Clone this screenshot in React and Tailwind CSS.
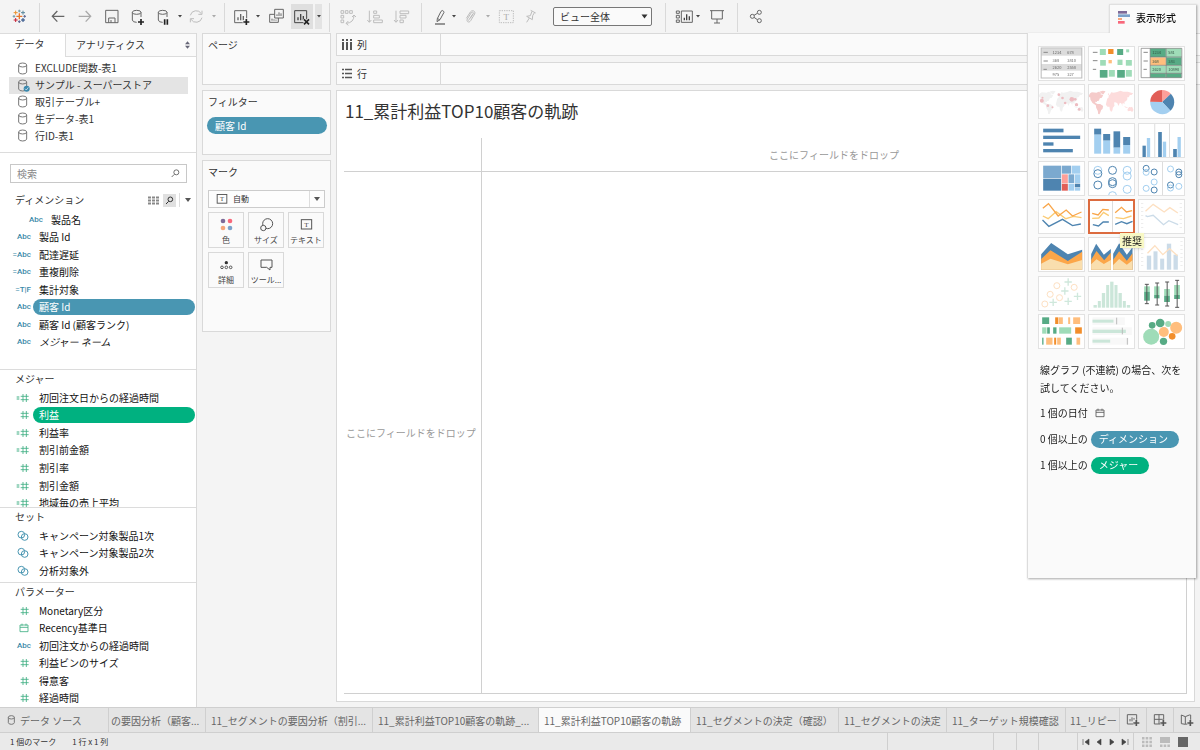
import React from 'react';
import clsx from 'clsx';

const BAR = { fill: 'none', stroke: '#666', strokeWidth: 3 };
const DIM = { fill: 'none', stroke: '#bdbdbd', strokeWidth: 3 };

const sources = [
    { name: 'EXCLUDE関数-表1' },
    { name: 'サンプル - スーパーストア', active: true },
    { name: '取引テーブル+' },
    { name: '生データ-表1' },
    { name: '行ID-表1' },
];

const dimensions = [
    { type: 'Abc', name: '製品名', nested: true },
    { type: 'Abc', name: '製品 Id' },
    { type: '=Abc', name: '配達遅延' },
    { type: '=Abc', name: '重複削除' },
    { type: '=T|F', name: '集計対象' },
    { type: 'Abc', name: '顧客 Id', pill: 'bg-[#4996b2]' },
    { type: 'Abc', name: '顧客 Id (顧客ランク)' },
    { type: 'Abc', name: 'メジャー ネーム', italic: true },
];

const measures = [
    { type: '=#', name: '初回注文日からの経過時間' },
    { type: '#', name: '利益', pill: 'bg-[#00b180]' },
    { type: '=#', name: '利益率' },
    { type: '=#', name: '割引前金額' },
    { type: '#', name: '割引率' },
    { type: '=#', name: '割引金額' },
    { type: '=#', name: '地域毎の売上平均' },
];

const sets = [
    { type: 'set', name: 'キャンペーン対象製品1次' },
    { type: 'set', name: 'キャンペーン対象製品2次' },
    { type: 'set', name: '分析対象外' },
];

const parameters = [
    { type: '#', name: 'Monetary区分' },
    { type: 'date', name: 'Recency基準日' },
    { type: 'Abc', name: '初回注文からの経過時間' },
    { type: '#', name: '利益ビンのサイズ' },
    { type: '#', name: '得意客' },
    { type: '#', name: '経過時間' },
];

const sheets = [
    { name: 'の要因分析（顧客...', width: 'w-[97px]', pad: 'pl-0.5' },
    { name: '11_セグメントの要因分析（割引...', width: 'w-[167px]' },
    { name: '11_累計利益TOP10顧客の軌跡_...', width: 'w-[166px]' },
    { name: '11_累計利益TOP10顧客の軌跡', width: 'w-[152px]', active: true },
    { name: '11_セグメントの決定（確認）', width: 'w-[148px]' },
    { name: '11_セグメントの決定', width: 'w-[108px]' },
    { name: '11_ターゲット規模確認', width: 'w-[119px]' },
];

/* ---------- toolbar ---------- */

// x and w are toolbar pixels, the drawing inside uses a grid three times finer
function Tool({ label, x, w, active, children }) {
    return (
        <button aria-label={label} className="h-[33px] shrink-0">
            <svg width={w} height="33" viewBox={`${x * 3} 0 ${w * 3} 99`} {...BAR}>
                {active && <rect x={x * 3} y="12" width={w * 3} height="75" fill="#dfdfdf" stroke="none" />}
                {children}
            </svg>
        </button>
    );
}

function Caret({ className, dim, label = 'メニュー' }) {
    return (
        <button aria-label={label} className={clsx('flex shrink-0 items-center justify-center', className)}>
            <svg width="4" height="3" viewBox="0 0 4 3"><path d="M0 0h4L2 2.4z" fill={dim ? '#aaa' : '#444'} /></svg>
        </button>
    );
}

const Sep = () => <div className="h-[29px] w-px shrink-0 self-end bg-[#d9d9d9] mb-px" />;

const Plus = ({ x, y }) => (
    <>
        <path d={`M${x - 11} ${y}h22M${x} ${y - 11}v22`} stroke="#f4f4f4" strokeWidth="9" />
        <path d={`M${x - 9} ${y}h18M${x} ${y - 9}v18`} stroke="#222" strokeWidth="5" />
    </>
);

function Logo() {
    const marks = [
        [58, 49, 9, '#e8762c', 4], [58, 33, 4, '#7099a6', 3], [58, 65, 4, '#5c6692', 3],
        [42, 49, 4, '#7099a6', 3], [74, 49, 4, '#5c6692', 3], [47, 38, 6, '#eb912c', 3],
        [69, 38, 6, '#59879b', 3], [47, 60, 6, '#c72035', 3], [69, 60, 6, '#1f457e', 3],
    ];
    return (
        <Tool label="スタート ページ" x={0} w={39}>
            {marks.map(([x, y, r, color, sw]) => (
                <path key={`${x}-${y}`} d={`M${x - r} ${y}h${r * 2}M${x} ${y - r}v${r * 2}`} stroke={color} strokeWidth={sw} />
            ))}
        </Tool>
    );
}

function Toolbar() {
    return (
        <header className="flex h-[33px] shrink-0 items-center">
            <Logo />
            <Sep />
            <Tool label="戻る" x={40} w={31}><path d="M158 49h35M172 33l-15 16 15 16" strokeWidth="4" /></Tool>
            <Tool label="進む" x={71} w={27}><path d="M236 49h35M257 33l15 16-15 16" stroke="#aaa" strokeWidth="4" /></Tool>
            <Tool label="保存" x={98} w={27}><path d="M317 31h37v37h-37zM326 68V54h19v14M333 60v8" /></Tool>
            <Tool label="新しいデータ ソース" x={125} w={26}>
                <ellipse cx="410" cy="37" rx="13" ry="6" />
                <path d="M397 37v23q1 7 13 7M423 37v14" />
                <Plus x={423} y={66} />
            </Tool>
            <Tool label="自動更新の一時停止" x={151} w={23}>
                <ellipse cx="488" cy="37" rx="13" ry="6" />
                <path d="M475 37v23q1 7 13 7M501 37v14" />
                <path d="M494 58v16M502 58v16" stroke="#222" strokeWidth="5" />
            </Tool>
            <Caret className="w-3" />
            <Tool label="更新" x={186} w={22}>
                <path d="M571 46a18 18 0 0 1 33-5M606 53a18 18 0 0 1-33 5M606 32v11h-11M571 67V56h11" stroke="#bdbdbd" />
            </Tool>
            <Caret className="w-4 pr-1" dim />
            <Sep />
            <Tool label="新しいワークシート" x={225} w={27}>
                <path d="M704 32h36v36h-36z" />
                <path d="M714 61v-9M722 61V42M730 61V48" strokeWidth="4" />
                <Plus x={739} y={66} />
            </Tool>
            <Caret className="w-3" />
            <Tool label="複製" x={264} w={27}>
                <path d="M824 28h26v26h-26zM824 43h-15v24h26V54" />
                <path d="M831 48v-5M837 48V37M843 48v-8M816 62v-6M822 62v-4M828 62v-3" />
            </Tool>
            <Tool label="シートのクリア" x={291} w={22} active>
                <path d="M884 32h36v36h-36z" stroke="#444" />
                <path d="M894 61v-9M902 61V42M910 61V48" stroke="#444" strokeWidth="4" />
                <path d="M911 57l17 17M928 57l-17 17" stroke="#dfdfdf" strokeWidth="10" />
                <path d="M912 58l15 15M927 58l-15 15" stroke="#222" strokeWidth="5" />
            </Tool>
            <Caret className="ml-0.5 mr-[7px] h-[25px] w-[7px] bg-[#e3e3e3]" />
            <Sep />
            <Tool label="行と列の交換" x={0} w={31}>
                <g {...DIM}><path d="M33 32h8v8h-8zM46 32h8v8h-8zM59 32h8v8h-8zM33 46h8v8h-8zM33 60h8v8h-8zM72 46q0 22-23 24M66 51l6-6 6 6M55 63l-7 7 7 6" /></g>
            </Tool>
            <Tool label="昇順で並べ替え" x={31} w={27}>
                <g {...DIM}><path d="M118 32v34M112 60l6 7 6-7M131 33h9v7h-9zM131 46h17v8h-17zM131 60h26v8h-26z" /></g>
            </Tool>
            <Tool label="降順で並べ替え" x={58} w={33}>
                <g {...DIM}><path d="M198 32v34M192 60l6 7 6-7M210 33h26v8h-26zM210 46h18v8h-18zM210 60h10v8h-10z" /></g>
            </Tool>
            <Sep />
            <Tool label="ハイライト" x={92} w={26}>
                <path d="M315 72h30" strokeWidth="4" />
                <path d="M322 56l11-22q4-5 8 0l1 3-12 22-9 6zM322 55l8 5" />
            </Tool>
            <Caret className="w-3" />
            <Tool label="グループ" x={130} w={22}>
                <path d="M429 41l-14 21M409 55l12-19c6-8 17-2 13 6l-12 20c-5 8-14 3-10-5l12-19c3-4 8 0 6 3l-9 14" stroke="#bdbdbd" />
            </Tool>
            <Caret className="w-[11px]" dim />
            <Tool label="マーク ラベルの表示" x={163} w={26}>
                <rect x="508" y="32" width="42" height="36" stroke="#bdbdbd" strokeDasharray="4 3" />
                <text x="529" y="59" textAnchor="middle" fontSize="27" fill="#aaa" stroke="none" className="font-['Liberation_Serif',serif]">T</text>
            </Tool>
            <Tool label="軸の固定" x={189} w={26}>
                <path d="M602 31l15 8M606 34l-5 13-11 2 17 10 1-12 6-10M598 54l-8 13" stroke="#bdbdbd" />
            </Tool>
            <label className="relative ml-2 mr-[13px] flex h-[19px] w-[99px] shrink-0">
                <select aria-label="適合" className="w-full appearance-none rounded-xs border border-[#777] bg-[#fafafa] pl-1.5 text-[10px] leading-4 text-[#333]">
                    <option>ビュー全体</option>
                </select>
                <svg className="pointer-events-none absolute right-1 top-[7px]" width="7" height="5" viewBox="0 0 7 5"><path d="M.5.5h6L3.500 4.500z" fill="#333" /></svg>
            </label>
            <Sep />
            <Tool label="カードの表示/非表示" x={336} w={27}>
                <path d="M1039 33h9v7h-9zM1039 46h9v8h-9zM1039 60h9v7h-9zM1054 33h33v34h-33z" />
                <path d="M1063 61v-8M1070 61V43M1078 61V49" stroke="#444" strokeWidth="4" />
            </Tool>
            <Caret className="w-[13px] pr-1" />
            <Tool label="プレゼンテーション モード" x={376} w={31}>
                <path d="M1140 32h42M1145 32v25h32V32M1161 57v12M1152 69h18" />
            </Tool>
            <Sep />
            <Tool label="共有" x={408} w={36}>
                <circle cx="1267" cy="49" r="6" /><circle cx="1288" cy="37" r="6" /><circle cx="1288" cy="62" r="6" />
                <path d="M1272 46l10-6M1272 52l10 7" />
            </Tool>
        </header>
    );
}

/* ---------- data pane ---------- */

function Cylinder({ active }) {
    return (
        <svg width="12" height="13" viewBox="0 0 36 39" fill="none" stroke="#777" strokeWidth="3">
            <ellipse cx="14" cy="9" rx="12" ry="6" />
            <path d="M2 9v21q1 6 12 6t12-6V9" />
            {active && <><circle cx="26" cy="29" r="9" fill="#3a88ad" stroke="none" /><path d="M21 29l4 4 6-8" stroke="#fff" strokeWidth="2" /></>}
        </svg>
    );
}

function Calendar({ color }) {
    return (
        <svg width="10" height="10" viewBox="0 0 30 30" fill="none" stroke={color} strokeWidth="2.500">
            <path d="M3 6h24v20H3zM3 13h24M9 2v6M21 2v6" />
        </svg>
    );
}

function FieldType({ type }) {
    if (type === 'set') {
        return (
            <svg className="mr-1" width="12" height="12" viewBox="0 0 36 36" fill="none" stroke="#4996b2" strokeWidth="3">
                <circle cx="13" cy="14" r="10" /><circle cx="23" cy="21" r="10" />
            </svg>
        );
    }
    if (type === 'date') return <span className="mr-1"><Calendar color="#3fae83" /></span>;
    if (type.endsWith('#')) {
        return (
            <svg className="mr-1" width="14" height="10" viewBox="0 0 42 30" fill="none" stroke="#3fae83" strokeWidth="2.500">
                <path d="M24 3v24M34 3v24M17 10h24M17 20h24" />
                {type === '=#' && <path d="M5 12h8M5 18h8" strokeWidth="3" />}
            </svg>
        );
    }
    return <span className="mr-0.5 font-[Roboto,sans-serif] text-[8px] font-medium leading-4 text-[#3a88a8]">{type}</span>;
}

function FieldList({ items, className }) {
    return (
        <ul className={clsx('grid auto-rows-fr', className)}>
            {items.map((f) => (
                <li key={f.name} className={clsx('flex items-center', f.nested && 'pl-3')}>
                    <span className="flex w-[33px] shrink-0 items-center justify-end">
                        <FieldType type={f.type} />
                    </span>
                    <button
                        className={clsx(
                            'mr-px h-4 flex-1 whitespace-nowrap rounded-full pl-1.5 text-left leading-4',
                            f.pill ? ['text-white', f.pill] : 'text-[#111]',
                            f.italic && 'italic'
                        )}
                    >
                        {f.name}
                    </button>
                </li>
            ))}
        </ul>
    );
}

function DataPane() {
    return (
        <aside className="flex w-[197px] shrink-0 flex-col overflow-hidden border-r border-[#d9d9d9] bg-white">
            <div className="flex h-6 shrink-0 border-t border-[#dcdcdc] leading-5">
                <button className="flex w-[65px] shrink-0 justify-center pr-1.5">データ</button>
                <button className="flex flex-1 items-center justify-between border-b border-l border-[#dcdcdc] bg-[#fafafa] pl-2.5 pr-1.5">
                    アナリティクス
                    <svg width="5" height="8" viewBox="0 0 5 8" fill="#667"><path d="M0 3.200h5L2.500.3zM0 4.800h5L2.500 7.700z" /></svg>
                </button>
            </div>
            <ul className="mb-2 ml-[9px] mr-2 mt-[3px] grid h-[84px] shrink-0 auto-rows-fr">
                {sources.map((s) => (
                    <li key={s.name} className={clsx('flex items-center gap-[5px] pl-[9px]', s.active && 'bg-[#e4e4e4]')}>
                        <Cylinder active={s.active} />
                        <button className="leading-4">{s.name}</button>
                    </li>
                ))}
            </ul>
            <div className="flex h-[217px] shrink-0 flex-col border-t border-[#dcdcdc] pt-[11px]">
                <label className="ml-2.5 mr-[9px] flex h-[19px] items-center border border-[#c8c8c8] px-1.5">
                    <input aria-label="検索" placeholder="検索" className="min-w-0 flex-1 leading-4 outline-none placeholder:text-[#888]" />
                    <svg width="9" height="9" viewBox="0 0 27 27" fill="none" stroke="#555" strokeWidth="2.500"><circle cx="16" cy="10" r="7.500" /><path d="M10 16l-8 8" /></svg>
                </label>
                <div className="flex items-center pl-[15px] pt-[9px]">
                    <h2 className="flex-1 leading-4">ディメンション</h2>
                    <button aria-label="一覧表示">
                        <svg width="11" height="9" viewBox="0 0 11 9" fill="#888">
                            {[0, 3, 6].map((y) => [0, 4, 8].map((x) => <rect key={`${x}${y}`} x={x} y={y + 0.5} width="3" height="2" />))}
                        </svg>
                    </button>
                    <button aria-label="フィールドの検索" className="ml-1 flex h-[13px] w-[13px] items-center justify-center bg-[#e0e0e0]">
                        <svg width="9" height="9" viewBox="0 0 27 27" fill="none" stroke="#333" strokeWidth="3"><circle cx="16" cy="10" r="7" /><path d="M11 16l-8 8" /></svg>
                    </button>
                    <button aria-label="表示メニュー" className="ml-[3px] mr-[5px] flex h-3.5 items-center border-l border-[#ddd] pl-[5px]">
                        <svg width="6" height="4" viewBox="0 0 6 4"><path d="M0 0h6L3 4z" fill="#555" /></svg>
                    </button>
                </div>
                <FieldList items={dimensions} className="mt-[3px] h-[140px]" />
            </div>
            <div className="h-[138px] shrink-0 overflow-hidden border-t border-[#dcdcdc]">
                <h2 className="pb-px pl-[15px] leading-[18px]">メジャー</h2>
                <FieldList items={measures} className="h-[123px]" />
            </div>
            <div className="h-[75px] shrink-0 border-t border-[#dcdcdc]">
                <h2 className="pb-px pl-[15px] leading-[18px]">セット</h2>
                <FieldList items={sets} className="h-[53px]" />
            </div>
            <div className="flex-1 border-t border-[#dcdcdc]">
                <h2 className="pb-px pl-[15px] leading-[18px]">パラメーター</h2>
                <FieldList items={parameters} className="h-[105px]" />
            </div>
        </aside>
    );
}

/* ---------- shelves ---------- */

function MarkButton({ label, children }) {
    return (
        <button className="flex h-9 w-[36px] flex-col items-center justify-between whitespace-nowrap border border-[#d9d9d9] pt-1 text-[8px] leading-3 text-[#444]">
            <svg width="15" height="15" viewBox="0 0 45 45" fill="none" stroke="#555" strokeWidth="3">{children}</svg>
            <span className="pb-px">{label}</span>
        </button>
    );
}

const TextGlyph = () => (
    <>
        <rect x="7" y="8" width="31" height="28" />
        <text x="22.500" y="30" textAnchor="middle" fontSize="21" fill="#444" stroke="none" className="font-['Liberation_Serif',serif]">T</text>
    </>
);

function Cards() {
    const card = 'border border-[#d9d9d9] bg-[#fafafa] pl-[5px] pr-[3px]';
    return (
        <div className="flex w-[129px] shrink-0 flex-col gap-[5px]">
            <section className={clsx(card, 'h-[52px] pt-[3px]')}><h2 className="leading-4">ページ</h2></section>
            <section className={clsx(card, 'h-[65px] pt-[3px]')}>
                <h2 className="leading-4">フィルター</h2>
                <button className="-ml-px mt-[7px] h-[17px] w-[120px] rounded-full bg-[#4996b2] pl-2 text-left leading-[16px] text-white">顧客 Id</button>
            </section>
            <section className={clsx(card, 'h-[172px] pt-[3px]')}>
                <h2 className="leading-4">マーク</h2>
                <label className="relative mt-2.5 flex h-[18px] w-[117px]">
                    <select aria-label="マークの種類" className="w-full appearance-none border border-[#ccc] bg-[#fdfdfd] pl-6 text-[8px] leading-4">
                        <option>自動</option>
                    </select>
                    <svg className="pointer-events-none absolute left-[7px] top-0.5" width="14" height="14" viewBox="0 0 45 45" fill="none" stroke="#555" strokeWidth="3"><TextGlyph /></svg>
                    <svg className="pointer-events-none absolute right-0 top-0" width="16" height="18" viewBox="0 0 16 18"><path d="M.5 1v16" stroke="#ddd" /><path d="M5 7h6L8 11z" fill="#555" /></svg>
                </label>
                <div className="mt-1 flex flex-wrap gap-1">
                    <MarkButton label="色">
                        <g stroke="none"><circle cx="12" cy="12" r="7" fill="#7d6a98" /><circle cx="33" cy="12" r="7" fill="#f8687b" /><circle cx="12" cy="33" r="7" fill="#f5a57b" /><circle cx="33" cy="33" r="7" fill="#7ba1ca" /></g>
                    </MarkButton>
                    <MarkButton label="サイズ"><circle cx="26" cy="20" r="15" /><circle cx="13" cy="33" r="8" fill="#fafafa" /></MarkButton>
                    <MarkButton label="テキスト"><TextGlyph /></MarkButton>
                    <MarkButton label="詳細">
                        <circle cx="22" cy="17" r="5" fill="#333" stroke="none" /><circle cx="9" cy="31" r="4" /><circle cx="22" cy="31" r="4" /><circle cx="35" cy="31" r="4" />
                    </MarkButton>
                    <MarkButton label="ツール..."><path d="M6 9h33v22h-6v8l-10-8H6z" /></MarkButton>
                </div>
            </section>
        </div>
    );
}

function Shelf({ label, children }) {
    return (
        <div className="flex h-[23px] shrink-0 border border-r-0 border-[#d9d9d9] bg-[#fafafa]">
            <div className="flex w-[104px] items-center gap-[5px] border-r border-[#d9d9d9] pl-[5px] leading-4">
                <svg width="10" height="11" viewBox="0 0 10 11" stroke="#555" strokeWidth="2">{children}</svg>
                {label}
            </div>
        </div>
    );
}

function Sheet() {
    return (
        <main className="flex min-w-0 flex-1 flex-col">
            <Shelf label="列"><path d="M1 0v2M5 0v2M9 0v2M1 3v8M5 3v8M9 3v8" /></Shelf>
            <div className="h-[6px]" />
            <Shelf label="行"><path d="M0 1.500h2M0 5.500h2M0 9.500h2M3 1.500h7M3 5.500h7M3 9.500h7" strokeWidth="1.500" /></Shelf>
            <section className="mb-[5px] mr-[5px] mt-[5px] flex flex-1 flex-col border border-[#d9d9d9] bg-white pb-[7px] pl-[7px] pr-[7px]">
                <h1 className="pb-3.5 pl-px pt-[7px] text-[17px] leading-[26px] text-[#333]">11_累計利益TOP10顧客の軌跡</h1>
                <div className="grid flex-1 grid-cols-[138px_1fr] grid-rows-[34px_1fr] border-b border-r border-[#d0d0d0] text-[#999]">
                    <div className="border-b border-r border-[#d0d0d0]" />
                    <div className="flex items-center justify-center border-b border-[#d0d0d0]">ここにフィールドをドロップ</div>
                    <div className="flex items-center whitespace-nowrap border-r border-[#d0d0d0] pl-0.5">ここにフィールドをドロップ</div>
                    <div />
                </div>
            </section>
        </main>
    );
}

/* ---------- show me ---------- */

const Rects = ({ list }) => list.map(([x, y, w, h, fill]) => <rect key={`${x}-${y}-${fill}`} x={x} y={y} width={w} height={h} fill={fill} />);
const Rings = ({ list, r = 12 }) => list.map(([x, y, c]) => <circle key={`${x}-${y}`} cx={x} cy={y} r={r} fill="none" stroke={c} strokeWidth="3" />);

const B = '#4e84b0';
const L = '#a3cff0';
const G = '#57ab85';
const M = '#9fdcb8';
const O = '#f28e2b';
const P = '#ffbe7d';

const AMERICAS = 'M6 28l5-3 14 1 6-3 8 3-2 5 8 3-4 7-6 2-3 7-5 1-1 3-5-1 1 4 6 3 8 0 9 6-2 9-4 3-2 6-3 7-4-1-1-9-5-10-1-7-10-7-6-10-1-7-7-1zM33 23l11-3 8 2-6 9-5 0-3-6z';
const OLD_WORLD = 'M57 44l5-4-1-5 5-4 3-6 8 1 10-2 10-4 8 3 14 0 10 3 6 2-5 5-5 0-3 7-4-1-1 8-4 5-4 1 0 8-4-4-3 3 2 7-5-9-4-2-4 10-4-9-8-3-1 5 1 6-5 6-1 8-4 5-4-7-1-9-6 0-5-6zM60 28l3 1-1 4-3-1zM118 76l5-7 5 1 4-2 4 10-4 6-5-4-8 2zM107 66l6 2 8 3-8 0z';

const charts = [
    { name: 'テキスト表', art: (
        <>
            <Rects list={[[9, 7, 122, 22, '#dcdcdc'], [9, 54, 122, 20, '#dcdcdc']]} />
            <rect x="9" y="6" width="122" height="90" fill="none" stroke="#bbb" strokeWidth="3" />
            <path d="M16 19h13M16 45h13M16 70h10" stroke="#888" strokeWidth="3" />
            <g fontSize="12" fill="#666"><text x="43" y="24">1234</text><text x="87" y="24">678</text><text x="43" y="48">368</text><text x="87" y="48">3810</text><text x="43" y="70">2620</text><text x="87" y="70">2558</text><text x="43" y="91">975</text><text x="87" y="91">327</text></g>
        </>
    ) },
    { name: 'ヒート マップ', art: (
        <>
            <path d="M14 19h14M14 44h14M14 70h10" stroke="#888" strokeWidth="3" />
            <Rects list={[[35, 9, 18, 18, M], [60, 9, 16, 15, O], [87, 9, 18, 18, G], [114, 10, 9, 9, M], [36, 42, 17, 17, M], [61, 42, 10, 10, P], [88, 41, 15, 16, M], [113, 42, 18, 17, M], [35, 72, 23, 23, G], [62, 72, 18, 20, M], [87, 72, 23, 23, G], [113, 72, 18, 20, M]]} />
        </>
    ) },
    { name: 'ハイライト表', art: (
        <>
            <Rects list={[[36, 7, 47, 26, G], [84, 7, 46, 26, M], [36, 34, 47, 24, P], [84, 34, 46, 24, G], [36, 59, 47, 22, M], [84, 59, 46, 22, M], [36, 82, 47, 13, G], [84, 82, 46, 13, G]]} />
            <path d="M9 7h122v88H9zM36 7v88M84 7v88M36 33h95M36 58h95M36 82h95" fill="none" stroke="#777" strokeWidth="2" />
            <path d="M16 19h13M16 45h13M16 70h10" stroke="#888" strokeWidth="3" />
            <g fontSize="12" fill="#335544"><text x="42" y="24">1234</text><text x="90" y="24">581</text><text x="42" y="50">368</text><text x="90" y="50">383</text><text x="42" y="75">2620</text><text x="90" y="75">10890</text></g>
        </>
    ) },
    { name: '記号マップ', art: (
        <>
            <path d={AMERICAS + OLD_WORLD} fill="#f1f1f1" />
            {[[13, 41, 3], [11, 50, 6], [29, 65, 4], [43, 70, 3], [62, 32, 4], [73, 42, 4], [81, 57, 4], [101, 46, 7], [111, 46, 4], [115, 62, 5], [123, 76, 4]].map(([x, y, r]) => <circle key={x} cx={x} cy={y} r={r} fill="#edbcc1" />)}
        </>
    ) },
    { name: 'マップ', art: <><path d={OLD_WORLD} fill="#fddcdc" /><path d={AMERICAS} fill="#f5cbca" /></> },
    { name: '円グラフ', art: (
        <>
            <path d="M72 54V18A36 36 0 0 1 98 29z" fill="#fe9f99" />
            <path d="M72 54L98 29A36 36 0 0 1 97 80z" fill={B} />
            <path d="M72 54L97 80A36 36 0 0 1 36 53z" fill={L} />
            <path d="M72 54L36 53A36 36 0 0 1 72 18z" fill="#e15e57" />
        </>
    ) },
    { name: '横棒', art: <Rects list={[[15, 17, 61, 11, B], [15, 38, 111, 10, B], [15, 58, 31, 10, B], [15, 78, 89, 10, B]]} /> },
    { name: '積み上げ棒', art: <Rects list={[[18, 17, 21, 18, B], [18, 35, 21, 57, L], [45, 33, 21, 20, B], [45, 53, 21, 39, L], [76, 25, 20, 49, B], [76, 74, 20, 18, L], [105, 42, 21, 24, B], [105, 66, 21, 26, L]]} /> },
    { name: '並列棒', art: <Rects list={[[13, 68, 10, 35, B], [26, 45, 10, 58, L], [49, 2, 2, 101, '#ccc'], [60, 27, 11, 76, B], [74, 56, 10, 47, L], [93, 2, 2, 101, '#ccc'], [105, 78, 11, 25, B], [118, 42, 10, 61, L]]} /> },
    { name: 'ツリーマップ', art: <Rects list={[[15, 14, 54, 37, '#7ba9cf'], [15, 53, 54, 36, B], [71, 14, 28, 24, '#7ba9cf'], [101, 14, 25, 24, L], [71, 40, 18, 26, '#fe9f99'], [91, 40, 17, 26, '#7ba9cf'], [110, 40, 16, 26, L], [71, 68, 18, 21, '#e15e57'], [91, 68, 17, 21, L], [110, 68, 16, 11, B], [110, 80, 16, 9, L]]} /> },
    { name: '円ビュー', art: <Rings list={[[29, 28, L], [29, 38, B], [29, 72, B], [73, 28, B], [73, 62, B], [73, 68, B], [73, 104, L], [117, 28, L], [117, 45, L], [117, 85, L]]} /> },
    { name: '並列円', art: <><path d="M73 2v101" stroke="#ccc" strokeWidth="2" /><Rings r={9} list={[[24, 22, B], [24, 34, L], [48, 33, B], [48, 63, L], [24, 82, L], [48, 87, B], [97, 24, L], [122, 33, B], [122, 41, B], [97, 72, B], [97, 81, L], [122, 76, L]]} /></> },
    { name: '線 (連続)', art: (
        <g fill="none" strokeWidth="4"><path d="M14 43l16 8 24-21 29 21 23-7 24 4" transform="translate(0 8)" stroke="#fbcb74" /><path d="M14 28l17-14 29 37 24-18 19 18 27-12" stroke="#f9a64a" /><path d="M13 63l19 19 41-21 30 19 25-5" stroke={B} /></g>
    ) },
    { name: '線 (不連続)', active: true, art: (
        <g fill="none" strokeWidth="4"><path d="M73 2v101" stroke="#ccc" strokeWidth="2" /><path d="M12 58l20-1 14-17 16 10M82 56l24 3 24-8" stroke="#fbcb74" /><path d="M12 43l18 5 14-17 18 2M81 41l19-16 15 14 17-4" stroke="#f9a64a" /><path d="M14 77l17 4 14-12h17M81 76l19-8 16 6 17-7" stroke={B} /></g>
    ) },
    { name: '二重線', art: (
        <g fill="none" strokeWidth="4"><path d="M12 12v80M128 12v80" stroke="#e8e8e8" strokeWidth="7" strokeDasharray="2 10" /><path d="M22 37l23-21 33 23 17-13 24 16" stroke="#fde0c2" /><path d="M22 50l6 3 17-4 31 28 16-12 28 12" stroke="#cbdbe8" /></g>
    ) },
    { name: '面グラフ (連続)', art: <><path d="M9 52l30-34 50 34 43-14v60H9z" fill={B} /><path d="M9 66l28-26 52 32 43-28v54H9z" fill="#fca649" /><path d="M9 80l28-15 52 17 43-13v29H9z" fill="#f9deae" /></> },
    { name: '面グラフ (不連続)', art: <><path d="M9 51l15-31 23 33 21-17v62H9zM75 50l18-31 23 34 17-22v67H75z" fill={B} /><path d="M9 68l16-26 23 28 20-23v51H9zM75 68l18-25 23 28 17-22v49H75z" fill="#fca649" /><path d="M9 82l16-15 22 14 21-12v29H9zM75 84l18-18 23 17 17-13v28H75z" fill="#f9deae" /></> },
    { name: '二重組み合わせ', art: (
        <>
            <path d="M12 12v80M130 12v80" stroke="#e8e8e8" strokeWidth="7" strokeDasharray="2 10" />
            <Rects list={[[26, 56, 13, 42, '#cbdbe8'], [46, 43, 12, 55, '#cbdbe8'], [66, 65, 12, 33, '#cbdbe8'], [86, 20, 13, 78, '#cbdbe8'], [106, 53, 13, 45, '#cbdbe8']]} />
            <path d="M28 49l22-23 24 27 20-18 24 21" fill="none" stroke="#fde0c2" strokeWidth="4" />
        </>
    ) },
    { name: '散布図', art: <><Rings r={9} list={[[56, 29, '#fde0c2'], [108, 34, '#fde0c2'], [36, 55, '#fde0c2'], [64, 65, '#fde0c2'], [20, 84, '#fde0c2']]} /><path d="M79 18h22M90 7v22M69 45h22M80 34v22M107 61h22M118 50v22M34 79h22M45 68v22M79 76h22M90 65v22" stroke="#cfe8dc" strokeWidth="4" /></> },
    { name: 'ヒストグラム', art: <Rects list={[[16, 87, 10, 8], [29, 75, 9, 20], [41, 51, 10, 44], [54, 27, 9, 68], [66, 17, 10, 78], [79, 27, 9, 68], [91, 51, 10, 44], [104, 75, 9, 20], [116, 87, 10, 8]].map((b) => [...b, '#cbe6d9'])} /> },
    { name: '箱ヒゲ図', art: (
        <>
            <Rects list={[[18, 31, 17, 16, M], [18, 47, 17, 27, G], [48, 31, 16, 26, M], [48, 57, 16, 10, G], [78, 39, 17, 20, M], [78, 59, 17, 19, G], [108, 27, 17, 30, M], [108, 57, 17, 12, G]]} />
            <path d="M26 25v58M20 25h12M20 83h12M57 21v66M51 21h12M51 87h12M87 18v72M81 18h12M81 90h12M117 13v81M111 13h12M111 94h12" stroke="#555" strokeWidth="3" />
        </>
    ) },
    { name: 'ガント', art: <Rects list={[[12, 10, 21, 20, G], [51, 10, 9, 20, O], [61, 10, 13, 20, P], [90, 10, 6, 20, P], [105, 10, 21, 20, P], [12, 40, 13, 19, M], [27, 40, 8, 19, G], [45, 40, 10, 19, G], [63, 40, 36, 19, M], [111, 40, 20, 19, O], [12, 71, 4, 21, G], [24, 71, 19, 21, P], [48, 71, 6, 21, O], [57, 71, 11, 21, P], [84, 71, 17, 21, G], [115, 71, 11, 21, P]]} /> },
    { name: 'ブレット グラフ', art: <Rects list={[[13, 10, 97, 23, '#f8f8f8'], [13, 40, 118, 23, '#f8f8f8'], [13, 71, 108, 21, '#f8f8f8'], [13, 17, 63, 9, '#cbe6d9'], [84, 11, 3, 20, '#bbb'], [13, 47, 100, 10, '#cbe6d9'], [101, 41, 3, 20, '#bbb'], [13, 77, 53, 9, '#cbe6d9'], [116, 72, 3, 20, '#bbb']]} /> },
    { name: 'パック バブル', art: [[39, 68, 24, M], [42, 34, 10, G], [66, 27, 13, G], [90, 30, 9, M], [114, 41, 18, P], [77, 54, 15, P], [102, 67, 10, O], [76, 82, 11, G]].map(([x, y, r, c]) => <circle key={x} cx={x} cy={y} r={r} fill={c} />) },
];

function ShowMe() {
    return (
        <div className="absolute right-1 top-1 z-10 flex w-[169px] flex-col items-end drop-shadow-[1px_1px_1px_rgba(0,0,0,0.35)]">
            <button className="flex h-[29px] w-[87px] items-center gap-1.5 border-l border-t border-[#e0e0e0] bg-[#fafafa] pb-1 pl-2 font-medium text-[#111]">
                <svg width="12" height="13" viewBox="0 0 36 39">
                    <Rects list={[[0, 0, 27, 8, '#7d6a98'], [0, 10, 36, 8, '#7ba1ca'], [0, 21, 12, 6, '#f5a57b'], [0, 30, 20, 8, '#f8687b']]} />
                </svg>
                表示形式
            </button>
            <div className="h-[545px] w-full border-l border-[#dcdcdc] bg-[#fafafa] pl-2.5 pt-[13px] text-[#222]">
                <div className="relative grid h-[303px] w-[147px] grid-cols-3 content-between gap-x-[3px]">
                    {charts.map((c) => (
                        <button key={c.name} aria-label={c.name} className={clsx('h-[35px] bg-white', c.active ? 'outline-2 -outline-offset-2 outline-[#dc6b3f]' : 'outline -outline-offset-1 outline-[#e2e2e2]')}>
                            <svg className="w-full" height="35" viewBox="0 0 140 105">{c.art}</svg>
                        </button>
                    ))}
                    <div role="tooltip" className="absolute left-[82px] top-[187px] bg-[#f8f8c4] px-0.5 leading-[15px] shadow">推奨</div>
                </div>
                <p className="pl-0.5 pt-3 leading-[18px]">線グラフ (不連続) の場合、次を<br />試してください。</p>
                <ul className="space-y-2 pl-0.5 pt-[7px] leading-[18px]">
                    <li className="flex items-center gap-[7px]">1 個の日付 <Calendar color="#555" /></li>
                    <li className="flex items-center gap-[3px]">0 個以上の <button className="h-[17px] rounded-full bg-[#4996b2] pl-2 pr-[11px] leading-4 text-white">ディメンション</button></li>
                    <li className="flex items-center gap-[3px]">1 個以上の <button className="h-[17px] rounded-full bg-[#00b180] pl-2 pr-[11px] leading-4 text-white">メジャー</button></li>
                </ul>
            </div>
        </div>
    );
}

/* ---------- footer ---------- */

function NewSheet({ label, d }) {
    return (
        <button aria-label={label} className="flex w-[27px] shrink-0 items-center justify-center border-l border-[#cfcfcf]">
            <svg width="14" height="14" viewBox="0 0 42 42" fill="none" stroke="#666" strokeWidth="3">
                <path d={d} />
                <path d="M21 30h20M31 20v20" stroke="#e4e4e4" strokeWidth="9" />
                <path d="M22 30h18M31 21v18" stroke="#555" strokeWidth="5" />
            </svg>
        </button>
    );
}

function Footer() {
    const nav = [['最初', 'M1 1v6M7 1L3 4l4 3z'], ['前へ', 'M6 1L2 4l4 3z'], ['次へ', 'M2 1l4 3-4 3z'], ['最後', 'M7 1v6M1 1l4 3-4 3z']];
    return (
        <footer className="shrink-0 bg-[#eaeaea]">
            <nav className="flex h-[26px] border-b border-t border-[#cfcfcf] bg-[#e4e4e4] text-[#666]">
                <button className="flex w-[109px] shrink-0 items-center gap-1 border-r border-[#cfcfcf] pl-[7px]">
                    <svg width="9" height="10" viewBox="0 0 27 30" fill="none" stroke="#777" strokeWidth="3"><ellipse cx="13" cy="7" rx="9" ry="5" /><path d="M4 7v16q1 5 9 5t9-5V7" /></svg>
                    データ ソース
                </button>
                {sheets.map((s) => (
                    <button key={s.name} className={clsx('shrink-0 overflow-hidden whitespace-nowrap border-r border-[#cfcfcf] text-left', s.width, s.pad || 'pl-[5px]', s.active && 'bg-[#fafafa]')}>
                        {s.name}
                    </button>
                ))}
                <button className="min-w-0 flex-1 overflow-hidden whitespace-nowrap pl-1 text-left">11_リピー</button>
                <NewSheet label="新しいワークシート" d="M4 5h28v28H4zM12 25v-7M18 25V13M24 20v-5" />
                <NewSheet label="新しいダッシュボード" d="M4 5h28v28H4zM18 5v28M4 19h28" />
                <NewSheet label="新しいストーリー" d="M4 6l12 5 12-5h4v26h-4l-12 2-12-2zM16 11v22" />
            </nav>
            <div className="flex h-[17px] items-center pl-2.5 text-[8px] leading-4 text-[#333]">
                <span>1 個のマーク</span>
                <span className="ml-4 flex-1">1 行 x 1 列</span>
                <div className="flex h-full divide-x divide-[#cfcfcf] border-l border-[#cfcfcf]">
                    <span className="w-[106px]" /><span className="w-[23px]" /><span className="w-[22px]" /><span className="w-[39px]" />
                    <span className="flex items-center gap-[5px] px-1">
                        {nav.map(([label, d]) => (
                            <button key={label} aria-label={label}><svg width="8" height="8" viewBox="0 0 8 8" fill="#444" stroke="#444" strokeWidth=".6"><path d={d} /></svg></button>
                        ))}
                    </span>
                    <span className="flex items-center gap-2 px-2 pr-3">
                        <button aria-label="シート ソーター"><svg width="10" height="10" viewBox="0 0 10 10" fill="#bbb"><path d="M0 0h2.500v2.500H0zM3.700 0h2.500v2.500H3.700zM7.400 0h2.500v2.500H7.400zM0 3.700h2.500v2.500H0zM3.700 3.700h2.500v2.500H3.700zM7.400 3.700h2.500v2.500H7.400zM0 7.400h2.500v2.500H0zM3.700 7.400h2.500v2.500H3.700zM7.400 7.400h2.500v2.500H7.400z" /></svg></button>
                        <button aria-label="フィルムストリップ"><svg width="10" height="10" viewBox="0 0 10 10" fill="#bbb"><path d="M0 0h10v6H0zM0 7.400h2.500v2.500H0zM3.700 7.400h2.500v2.500H3.700zM7.400 7.400h2.500v2.500H7.400z" /></svg></button>
                        <button aria-label="タブ"><svg width="10" height="10" viewBox="0 0 10 10" fill="#666"><path d="M0 0h10v10H0z" /></svg></button>
                    </span>
                </div>
            </div>
        </footer>
    );
}

export default function App() {
    return (
        <div className="relative flex h-screen flex-col overflow-hidden bg-[#f4f4f4] font-['Noto_Sans_CJK_JP','Noto_Sans',sans-serif] text-[10px] text-[#333]">
            <Toolbar />
            <div className="flex min-h-0 flex-1">
                <DataPane />
                <div className="ml-[5px] flex min-w-0 flex-1 gap-[5px]">
                    <Cards />
                    <Sheet />
                </div>
            </div>
            <Footer />
            <ShowMe />
        </div>
    );
}
